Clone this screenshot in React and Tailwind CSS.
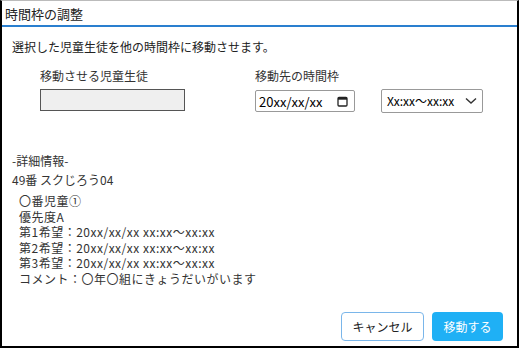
import React from 'react';

const FONT = { fontFamily: '"Noto Sans CJK JP", "Noto Sans", sans-serif' };

const details = [
  '〇番児童①',
  '優先度A',
  '第1希望：20xx/xx/xx xx:xx〜xx:xx',
  '第2希望：20xx/xx/xx xx:xx〜xx:xx',
  '第3希望：20xx/xx/xx xx:xx〜xx:xx',
  'コメント：〇年〇組にきょうだいがいます',
];

const App = () => {
  return (
    <div className="w-[519px] h-[348px] bg-white text-[#222] flex flex-col border-x-2 border-b-2 border-t border-x-black border-b-black border-t-[#bbb]" style={FONT}>
      {/* Header */}
      <div className="h-[26px] flex items-center px-[3px] border-b-2 border-[#2a7fcf] text-[13px] leading-none">
        時間枠の調整
      </div>

      <div className="flex-1 flex flex-col px-[10px] pt-[11px] text-[12px]">
        <p className="leading-[18px]">選択した児童生徒を他の時間枠に移動させます。</p>

        {/* Form row */}
        <div className="flex mt-[12px]">
          <div className="ml-[28px] w-[215px] flex flex-col">
            <span className="leading-[16px] text-[#333]">移動させる児童生徒</span>
            <div className="mt-[5px] w-[145px] h-[22px] bg-[#efefef] border border-[#555]" />
          </div>
          <div className="flex flex-col">
            <span className="leading-[16px] text-[#333]">移動先の時間枠</span>
            <div className="flex items-center mt-[5px]">
              <div className="w-[100px] h-[22px] border border-[#999] rounded-[2px] flex items-center justify-between pl-[3px] pr-[6px] text-[13px] text-black">
                <span className="leading-none">20xx/xx/xx</span>
                <svg width="11" height="11" viewBox="0 0 11 11">
                  <rect x="1" y="1.5" width="9" height="8.5" rx="1" fill="none" stroke="#222" strokeWidth="1.3" />
                  <rect x="1" y="1.5" width="9" height="2.2" fill="#222" />
                </svg>
              </div>
              <div className="ml-[26px] w-[102px] h-[24px] border border-[#999] rounded-[2px] flex items-center justify-between pl-[5px] pr-[5px] text-[12px] text-black">
                <span className="leading-none">Xx:xx〜xx:xx</span>
                <svg width="12" height="8" viewBox="0 0 12 8">
                  <path d="M1 1.5 L6 6 L11 1.5" fill="none" stroke="#333" strokeWidth="1.4" />
                </svg>
              </div>
            </div>
          </div>
        </div>

        {/* Details */}
        <div className="mt-[38px] flex flex-col leading-[19px] text-[#333]">
          <span>-詳細情報-</span>
          <span>49番 スクじろう04</span>
        </div>
        <ul className="mt-[4px] ml-[7px] flex flex-col leading-[15.6px] text-[#333] tracking-[0.5px]">
          {details.map((d, i) => (
            <li key={i}>{d}</li>
          ))}
        </ul>

        {/* Actions */}
        <div className="mt-auto mb-[5px] flex justify-end gap-[8px] pr-[4px]">
          <button className="w-[83px] h-[29px] border border-[#7ab6ea] rounded-[4px] bg-white text-[12px] text-[#222]">
            キャンセル
          </button>
          <button className="w-[71px] h-[29px] rounded-[4px] bg-[#1fb0f5] text-white text-[12px]">
            移動する
          </button>
        </div>
      </div>
    </div>
  );
};

export default App;
